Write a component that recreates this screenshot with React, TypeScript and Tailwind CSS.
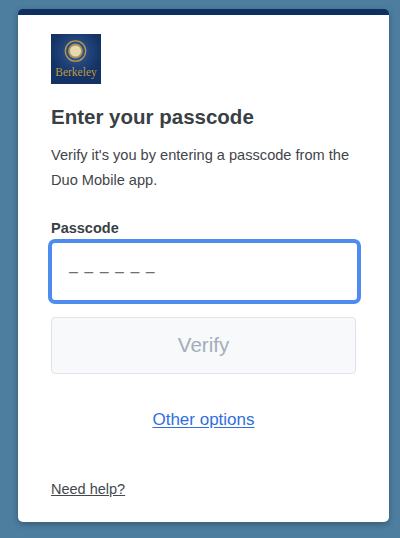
import React from 'react';

function BerkeleyLogo() {
  return (
    <svg width="50" height="50" viewBox="0 0 50 50" className="block">
      <defs>
        <radialGradient id="glow" cx="50%" cy="36%" r="52%">
          <stop offset="0%" stopColor="#3a639f" />
          <stop offset="55%" stopColor="#1f4379" />
          <stop offset="100%" stopColor="#143263" />
        </radialGradient>
      </defs>
      <rect width="50" height="50" fill="url(#glow)" />
      <circle cx="24.5" cy="17" r="10.2" fill="none" stroke="#c2953c" strokeWidth="1.3" />
      <circle cx="24.5" cy="17" r="7.4" fill="#a8925f" />
      <circle cx="24.5" cy="17" r="5.6" fill="#e6d9ae" />
      <text
        x="25"
        y="41.5"
        textAnchor="middle"
        fontSize="11.5"
        fill="#bd9748"
        fontFamily="'Liberation Serif', serif"
      >
        Berkeley
      </text>
    </svg>
  );
}

export default function App() {
  return (
    <div className="h-[538px] w-[400px] overflow-hidden bg-[#4d7ea0] pl-[18px] pt-[9px] font-['Liberation_Sans',Arial,sans-serif]">
      <div className="flex h-[513px] w-[371px] flex-col overflow-hidden rounded-[5px] border-t-[6px] border-[#0f2f61] bg-white px-[33px] shadow-[0_2px_6px_rgba(0,0,0,0.3)]">
        <div className="mt-[19px]">
          <BerkeleyLogo />
        </div>

        <h1 className="mt-[19px] text-[20.5px] leading-[28px] font-bold text-[#393f44]">
          Enter your passcode
        </h1>
        <p className="mt-[12px] text-[14.6px] leading-[25px] text-[#3f454a]">
          Verify it's you by entering a passcode from the Duo Mobile app.
        </p>

        <label className="mt-[26px] text-[14.5px] leading-[18px] font-bold text-[#393f44]">
          Passcode
        </label>
        <div className="mt-[2px] -ml-[3px] flex h-[65px] w-[313px] items-center rounded-[7px] border-[4px] border-[#4d8bf0] pl-[17px] text-[16px] tracking-[1px] text-[#6b7075]">
          – – – – – –
        </div>

        <button className="mt-[13px] h-[57px] w-[305px] rounded-[4px] border border-[#dfe2e8] bg-[#f8f9fa] text-[20.5px] text-[#a3adba]">
          Verify
        </button>

        <a className="mt-[34px] self-center text-[17px] leading-[24px] text-[#2f6fe0] underline underline-offset-2">
          Other options
        </a>

        <a className="mt-[47px] self-start text-[14.5px] leading-[20px] text-[#44494e] underline">
          Need help?
        </a>
      </div>
    </div>
  );
}
